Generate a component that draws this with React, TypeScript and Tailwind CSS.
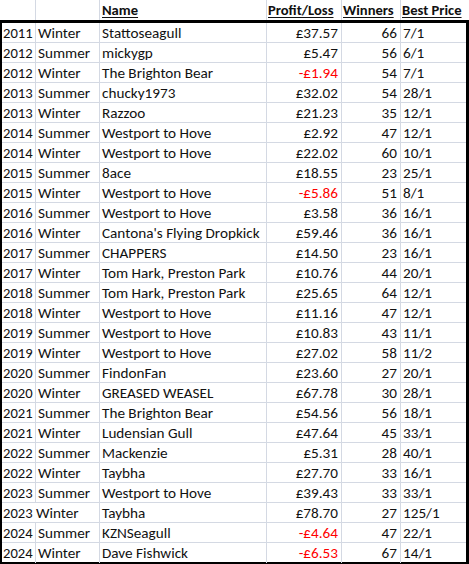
import React from "react";

type Row = [string, string, string, string, string, string];

const rows: Row[] = [
  ["2011", "Winter", "Stattoseagull", "£37.57", "66", "7/1"],
  ["2012", "Summer", "mickygp", "£5.47", "56", "6/1"],
  ["2012", "Winter", "The Brighton Bear", "-£1.94", "54", "7/1"],
  ["2013", "Summer", "chucky1973", "£32.02", "54", "28/1"],
  ["2013", "Winter", "Razzoo", "£21.23", "35", "12/1"],
  ["2014", "Summer", "Westport to Hove", "£2.92", "47", "12/1"],
  ["2014", "Winter", "Westport to Hove", "£22.02", "60", "10/1"],
  ["2015", "Summer", "8ace", "£18.55", "23", "25/1"],
  ["2015", "Winter", "Westport to Hove", "-£5.86", "51", "8/1"],
  ["2016", "Summer", "Westport to Hove", "£3.58", "36", "16/1"],
  ["2016", "Winter", "Cantona's Flying Dropkick", "£59.46", "36", "16/1"],
  ["2017", "Summer", "CHAPPERS", "£14.50", "23", "16/1"],
  ["2017", "Winter", "Tom Hark, Preston Park", "£10.76", "44", "20/1"],
  ["2018", "Summer", "Tom Hark, Preston Park", "£25.65", "64", "12/1"],
  ["2018", "Winter", "Westport to Hove", "£11.16", "47", "12/1"],
  ["2019", "Summer", "Westport to Hove", "£10.83", "43", "11/1"],
  ["2019", "Winter", "Westport to Hove", "£27.02", "58", "11/2"],
  ["2020", "Summer", "FindonFan", "£23.60", "27", "20/1"],
  ["2020", "Winter", "GREASED WEASEL", "£67.78", "30", "28/1"],
  ["2021", "Summer", "The Brighton Bear", "£54.56", "56", "18/1"],
  ["2021", "Winter", "Ludensian Gull", "£47.64", "45", "33/1"],
  ["2022", "Summer", "Mackenzie", "£5.31", "28", "40/1"],
  ["2022", "Winter", "Taybha", "£27.70", "33", "16/1"],
  ["2023", "Summer", "Westport to Hove", "£39.43", "33", "33/1"],
  ["2023 Winter", "", "Taybha", "£78.70", "27", "125/1"],
  ["2024", "Summer", "KZNSeagull", "-£4.64", "47", "22/1"],
  ["2024", "Winter", "Dave Fishwick", "-£6.53", "67", "14/1"],
];

const font = "font-['Carlito','Calibri','Lato',sans-serif] text-[#111111]";

export default function App() {
  return (
    <div className={`w-[469px] h-[564px] bg-white overflow-hidden ${font}`}>
      {/* header */}
      <div className="grid grid-cols-[36px_64px_167px_75px_59px_68px] h-[20px] leading-[20px] text-[14.6px]">
        <div className="border-r border-[#d4d9e3]" />
        <div className="border-r border-[#d4d9e3]" />
        <div className="border-r border-[#d4d9e3] pl-[2px] font-bold underline underline-offset-2">Name</div>
        <div className="border-r border-[#d4d9e3] pl-[1px] font-bold underline underline-offset-2 whitespace-nowrap">Profit/Loss</div>
        <div className="border-r border-[#d4d9e3] pl-[1px] font-bold underline underline-offset-2 whitespace-nowrap">Winners</div>
        <div className="pl-[1px] font-bold underline underline-offset-2 whitespace-nowrap">Best Price</div>
      </div>
      {/* body */}
      <div className="w-[469px] border-t-[3px] border-l-2 border-r-[3px] border-b-2 border-black text-[15.2px]">
        {rows.map((r, i) => {
          const last = i === rows.length - 1;
          const rowCls = `grid grid-cols-[34px_64px_167px_75px_59px_65px] ${
            last ? "h-[19px] leading-[20px]" : "h-[20px] leading-[20px] border-b border-[#d4d9e3]"
          }`;
          const neg = r[3].startsWith("-");
          return (
            <div key={i} className={rowCls}>
              {r[1] === "" ? (
                <div className="col-span-2 border-r border-[#d4d9e3] pl-[1px] whitespace-nowrap">
                  <span className="text-[14.6px]">2023</span> Winter
                </div>
              ) : (
                <>
                  <div className="border-r border-[#d4d9e3] pl-[1px] whitespace-nowrap overflow-hidden text-[14.6px]">{r[0]}</div>
                  <div className="border-r border-[#d4d9e3] pl-[2px] whitespace-nowrap">{r[1]}</div>
                </>
              )}
              <div className="border-r border-[#d4d9e3] pl-[2px] whitespace-nowrap overflow-hidden">{r[2]}</div>
              <div className={`border-r border-[#d4d9e3] pr-[3px] text-right whitespace-nowrap ${neg ? "text-[#ff0000]" : ""}`}>{r[3]}</div>
              <div className="border-r border-[#d4d9e3] pr-[3px] text-right whitespace-nowrap">{r[4]}</div>
              <div className="pl-[2px] whitespace-nowrap">{r[5]}</div>
            </div>
          );
        })}
      </div>
    </div>
  );
}
